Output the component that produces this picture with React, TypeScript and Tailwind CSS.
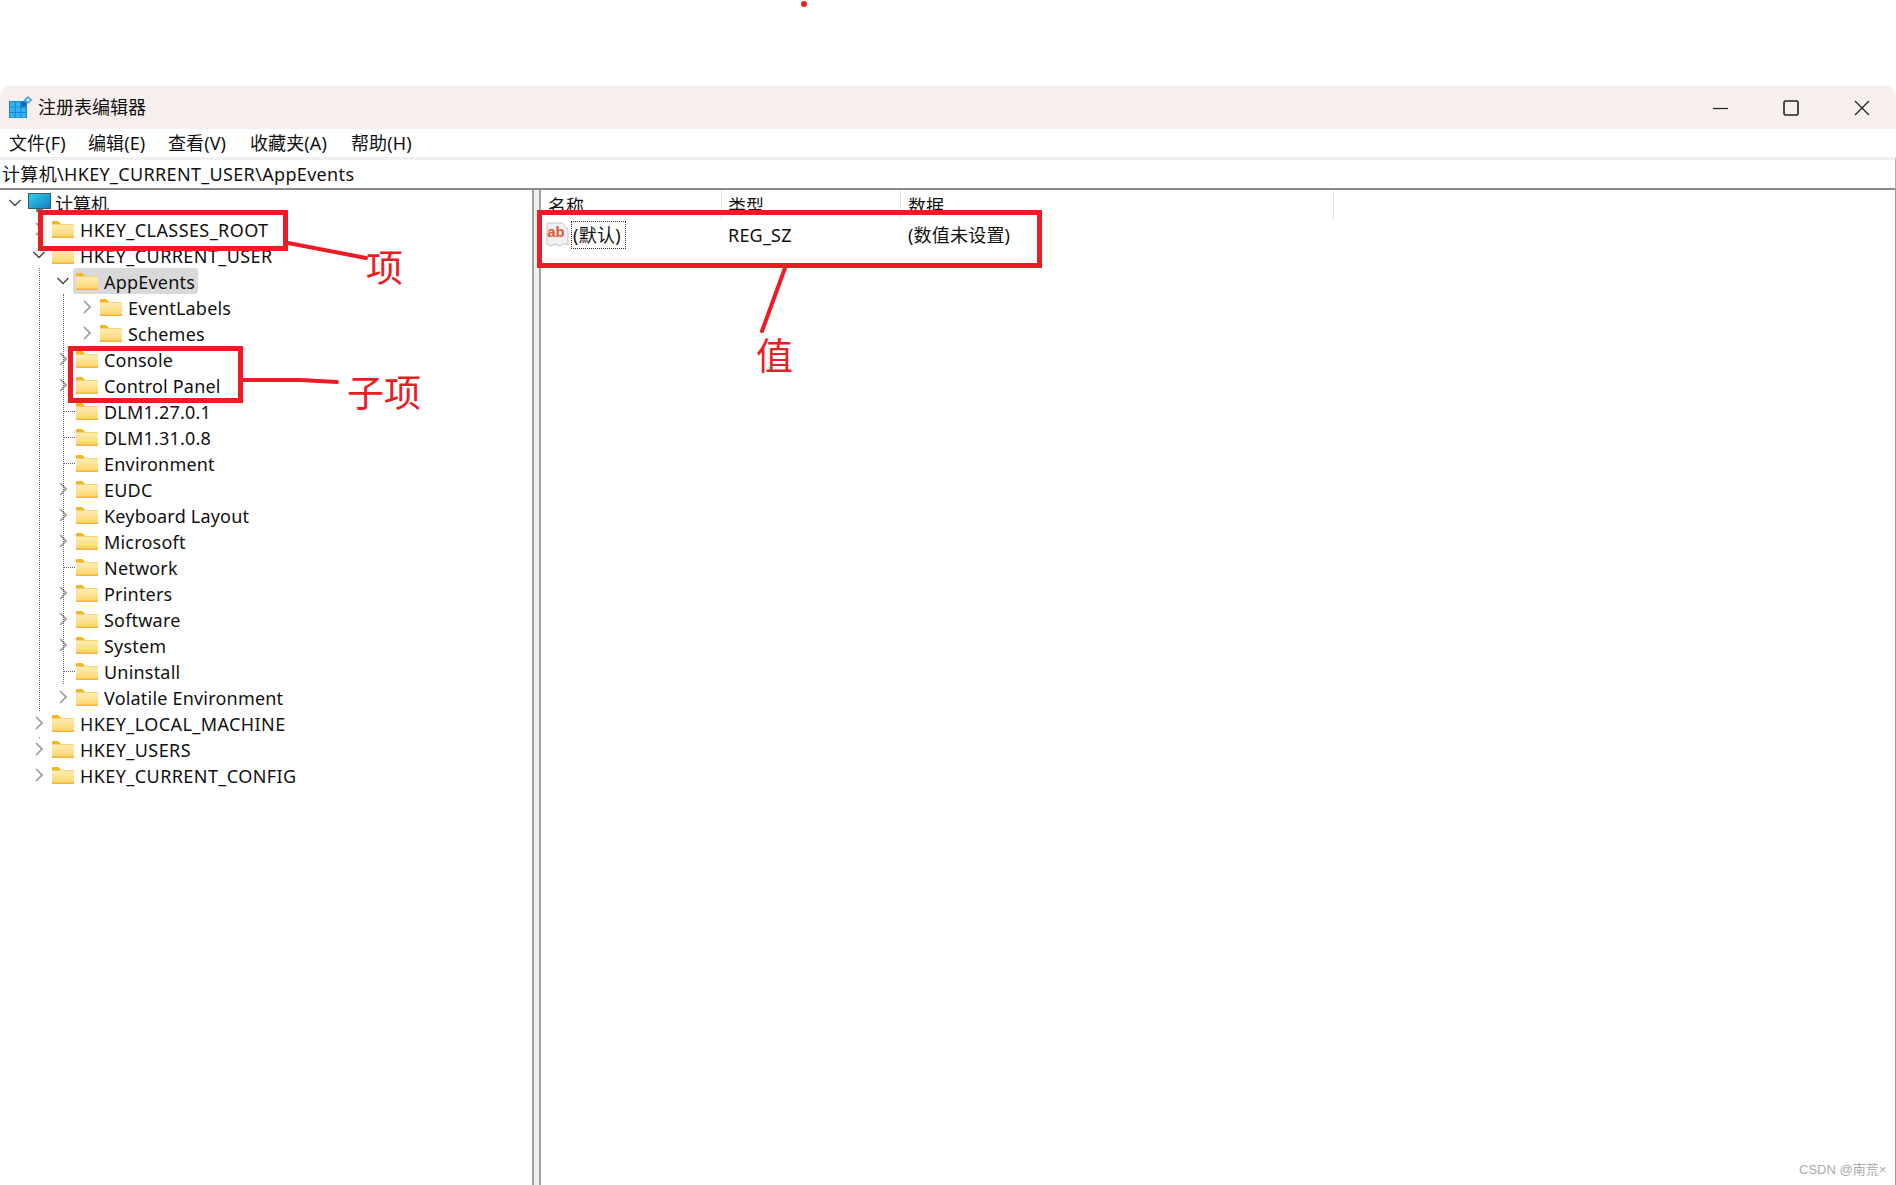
import React from "react";

const FONT = '"Noto Sans", "Noto Sans CJK SC", sans-serif';

function Folder() {
  return (
    <svg width="22" height="17" viewBox="0 0 22 17" className="shrink-0">
      <defs>
        <linearGradient id="fold" x1="0" y1="0" x2="0" y2="1">
          <stop offset="0" stopColor="#fdeeb4" />
          <stop offset="1" stopColor="#fbd670" />
        </linearGradient>
      </defs>
      <path d="M0 1.2 Q0 0 1.2 0 H6 L8.5 2.5 V4 H0 Z" fill="#f6b41b" />
      <path d="M0 3 H22 V17 H0 Z" fill="#f2b632" />
      <rect x="0" y="3.5" width="22" height="12" fill="url(#fold)" />
    </svg>
  );
}

function Chevron({ open }: { open?: boolean }) {
  return open ? (
    <svg width="14" height="8" viewBox="0 0 14 8" className="block">
      <path d="M1.5 1 L7 6.5 L12.5 1" fill="none" stroke="#444" strokeWidth="1.4" />
    </svg>
  ) : (
    <svg width="8" height="14" viewBox="0 0 8 14" className="block">
      <path d="M1 1 L7 7 L1 13" fill="none" stroke="#9a9a9a" strokeWidth="1.6" />
    </svg>
  );
}

type Node = { label: string; level: number; state: "open" | "closed" | "leaf"; selected?: boolean };

const nodes: Node[] = [
  { label: "HKEY_CLASSES_ROOT", level: 1, state: "closed" },
  { label: "HKEY_CURRENT_USER", level: 1, state: "open" },
  { label: "AppEvents", level: 2, state: "open", selected: true },
  { label: "EventLabels", level: 3, state: "closed" },
  { label: "Schemes", level: 3, state: "closed" },
  { label: "Console", level: 2, state: "closed" },
  { label: "Control Panel", level: 2, state: "closed" },
  { label: "DLM1.27.0.1", level: 2, state: "leaf" },
  { label: "DLM1.31.0.8", level: 2, state: "leaf" },
  { label: "Environment", level: 2, state: "leaf" },
  { label: "EUDC", level: 2, state: "closed" },
  { label: "Keyboard Layout", level: 2, state: "closed" },
  { label: "Microsoft", level: 2, state: "closed" },
  { label: "Network", level: 2, state: "leaf" },
  { label: "Printers", level: 2, state: "closed" },
  { label: "Software", level: 2, state: "closed" },
  { label: "System", level: 2, state: "closed" },
  { label: "Uninstall", level: 2, state: "leaf" },
  { label: "Volatile Environment", level: 2, state: "closed" },
  { label: "HKEY_LOCAL_MACHINE", level: 1, state: "closed" },
  { label: "HKEY_USERS", level: 1, state: "closed" },
  { label: "HKEY_CURRENT_CONFIG", level: 1, state: "closed" },
];

function TreeRow({ node }: { node: Node }) {
  return (
    <div className="flex h-[26px] items-center">
      {node.level === 1 && <div className="w-[24px] shrink-0" />}
      {node.level === 2 && <div className="w-[48px] shrink-0" />}
      {node.level === 3 && <div className="w-[72px] shrink-0" />}
      <div className="flex w-[28px] shrink-0 items-center justify-center pl-[2px]">
        {node.state === "open" && <Chevron open />}
        {node.state === "closed" && <Chevron />}
        {node.state === "leaf" && (
          <div className="ml-[12px] w-[12px] border-t border-dotted border-[#666]" />
        )}
      </div>
      <div
        className={
          node.selected
            ? "flex h-[26px] items-center gap-[6px] rounded-[3px] bg-[#d9d9d9] pl-[3px] pr-[3px] -ml-[3px]"
            : "flex h-[26px] items-center gap-[6px]"
        }
      >
        <Folder />
        <span
          className={
            node.level === 1
              ? "whitespace-nowrap pt-[2px] tracking-[0.42px]"
              : "whitespace-nowrap pt-[2px] tracking-[0.2px]"
          }
        >
          {node.label}
        </span>
      </div>
    </div>
  );
}

function RegIcon() {
  return (
    <svg width="24" height="22" viewBox="0 0 24 22" className="shrink-0 -mt-[2px]">
      <rect x="0" y="5" width="18" height="17" fill="#1688d4" />
      <g fill="#35b3ef">
        <rect x="1" y="6" width="4.5" height="4.5" />
        <rect x="6.7" y="6" width="4.5" height="4.5" />
        <rect x="1" y="11.5" width="4.5" height="4.5" />
        <rect x="6.7" y="11.5" width="4.5" height="4.5" />
        <rect x="12.4" y="11.5" width="4.5" height="4.5" />
        <rect x="1" y="17" width="4.5" height="4.5" />
        <rect x="6.7" y="17" width="4.5" height="4.5" />
        <rect x="12.4" y="17" width="4.5" height="4.5" />
      </g>
      <rect x="12.4" y="6" width="4.5" height="4.5" fill="#0f6db3" />
      <path d="M19 0 L23.5 4 L19 8 L14.5 4 Z" fill="#4aa3d8" />
      <path d="M19 2 L21.3 4 L19 6 L16.7 4 Z" fill="#bfe4f7" />
    </svg>
  );
}

function MonitorIcon() {
  return (
    <svg width="23" height="20" viewBox="0 0 23 20" className="shrink-0">
      <defs>
        <linearGradient id="scr" x1="0" y1="0" x2="1" y2="1">
          <stop offset="0" stopColor="#35d0ea" />
          <stop offset="1" stopColor="#0f7fc0" />
        </linearGradient>
      </defs>
      <rect x="0.5" y="0.5" width="22" height="15" fill="url(#scr)" stroke="#3a5a70" />
      <rect x="8" y="16" width="7" height="3" fill="#6a7a85" />
    </svg>
  );
}

function ValueIcon() {
  return (
    <svg width="23" height="25" viewBox="0 0 23 25" className="shrink-0">
      <path
        d="M1 2 Q1 1 2 1 H16 L22 7 V23 L18 21.5 L14 24 L9 22 L5 24 L1 22 Z"
        fill="#f2f2f2"
        stroke="#c4c4c4"
      />
      <text x="10" y="15" textAnchor="middle" fontSize="15" fontWeight="700" fill="#e0573a" fontFamily="Liberation Sans">
        ab
      </text>
    </svg>
  );
}

const menus = [
  { t: "文件(F)", c: "w-[79px] -ml-[1px]" },
  { t: "编辑(E)", c: "w-[80px]" },
  { t: "查看(V)", c: "w-[82px]" },
  { t: "收藏夹(A)", c: "w-[101px]" },
  { t: "帮助(H)", c: "w-[70px]" },
];

export default function App() {
  return (
    <div
      className="relative h-[1185px] w-full overflow-hidden bg-white pt-[86px] text-[18px] leading-none text-[#111]"
      style={{ fontFamily: FONT }}
    >
      {/* window */}
      <div className="flex h-[1099px] flex-col">
        <div className="flex h-[43px] shrink-0 items-center rounded-t-[10px] bg-[#f7efed] pl-[9px]">
          <RegIcon />
          <span className="ml-[6px] -mt-[2px] -translate-x-[1px]">注册表编辑器</span>
          <div className="ml-auto flex items-center">
            <svg width="16" height="16" viewBox="0 0 16 16" className="mr-[54px]">
              <path d="M0 8.5 H15" stroke="#222" strokeWidth="1.2" />
            </svg>
            <svg width="16" height="16" viewBox="0 0 16 16" className="mr-[55px]">
              <rect x="1" y="1" width="14" height="14" rx="1.5" fill="none" stroke="#222" strokeWidth="1.6" />
            </svg>
            <svg width="16" height="16" viewBox="0 0 16 16" className="mr-[26px]">
              <path d="M1 1 L15 15 M15 1 L1 15" stroke="#222" strokeWidth="1.3" />
            </svg>
          </div>
        </div>

        <div className="flex h-[28px] shrink-0 items-center pl-[10px]">
          {menus.map((m) => (
            <span key={m.t} className={`${m.c} whitespace-nowrap tracking-[0.1px]`}>
              {m.t}
            </span>
          ))}
        </div>

        <div className="flex h-[33px] shrink-0 items-center border-t-[3px] border-b-2 border-r border-t-[#f0f0f0] border-b-[#8a8a8e] border-r-[#aaa] pl-[2px] tracking-[0.33px]">
          计算机\HKEY_CURRENT_USER\AppEvents
        </div>

        <div className="flex min-h-0 flex-1 border-r border-[#999]">
          {/* tree */}
          <div className="relative w-[532px] shrink-0">
            <div className="absolute left-[39px] top-[78px] h-[443px] border-l border-dotted border-[#666]" />
            <div className="absolute left-[63px] top-[104px] h-[390px] border-l border-dotted border-[#666]" />
            <div className="absolute left-[39px] top-[547px] h-[1px] w-[1px] bg-[#777]" />
            <div className="flex h-[26px] items-center pl-[8px]">
              <div className="w-[20px] shrink-0">
                <Chevron open />
              </div>
              <MonitorIcon />
              <span className="ml-[4px] pt-[2px]">计算机</span>
            </div>
            {nodes.map((n) => (
              <TreeRow key={n.label} node={n} />
            ))}
          </div>

          <div className="w-[9px] shrink-0 border-x-2 border-[#a0a0a0] bg-[#f0f0f0]" />

          {/* list */}
          <div className="min-w-0 flex-1">
            <div className="flex h-[30px]">
              <div className="h-full w-[181px] border-r border-[#e5e5e5] pl-[7px] pt-[7px]">名称</div>
              <div className="h-full w-[179px] border-r border-[#e5e5e5] pl-[6px] pt-[7px]">类型</div>
              <div className="h-full w-[433px] border-r border-[#e5e5e5] pl-[7px] pt-[7px]">数据</div>
            </div>
            <div className="flex h-[29px] items-center">
              <div className="flex w-[187px] items-center pl-[5px]">
                <ValueIcon />
                <span className="ml-[2px] flex h-[28px] w-[55px] items-center border border-dotted border-[#333] pl-[1px] tracking-[0.3px]">
                  (默认)
                </span>
              </div>
              <div className="w-[180px] tracking-[0.2px]">REG_SZ</div>
              <div className="tracking-[0.2px]">(数值未设置)</div>
            </div>
          </div>
        </div>
      </div>

      {/* annotations */}
      <div className="absolute left-[801px] top-[1px] h-[6px] w-[6px] rounded-full bg-[#ed1c24]" />
      <div className="absolute left-[38px] top-[210px] h-[41px] w-[250px] border-[5px] border-[#ed1c24]" />
      <div className="absolute left-[68px] top-[346px] h-[57px] w-[175px] border-[5px] border-[#ed1c24]" />
      <div className="absolute left-[537px] top-[210px] h-[58px] w-[505px] border-[5px] border-[#ed1c24]" />
      <svg className="absolute left-0 top-0" width="1100" height="420" viewBox="0 0 1100 420">
        <path d="M288 243 L366 258" stroke="#ed1c24" strokeWidth="4" strokeLinecap="round" />
        <path d="M243 380 L300 380 L337 382" stroke="#ed1c24" strokeWidth="4" strokeLinecap="round" />
        <path d="M785 268 L762 331" stroke="#ed1c24" strokeWidth="4" strokeLinecap="round" />
      </svg>
      <span className="absolute left-[366px] top-[249px] text-[37px] leading-none text-[#ed1c24]">项</span>
      <span className="absolute left-[347px] top-[374px] text-[37px] leading-none text-[#ed1c24]">子项</span>
      <span className="absolute left-[756px] top-[337px] text-[37px] leading-none text-[#ed1c24]">值</span>
      <span
        className="absolute left-[1799px] top-[1163px] whitespace-nowrap text-[13px] leading-none text-[#aaa]"
        style={{ fontFamily: '"Liberation Sans", "Noto Sans CJK SC", sans-serif' }}
      >
        CSDN @南荒×
      </span>
    </div>
  );
}
